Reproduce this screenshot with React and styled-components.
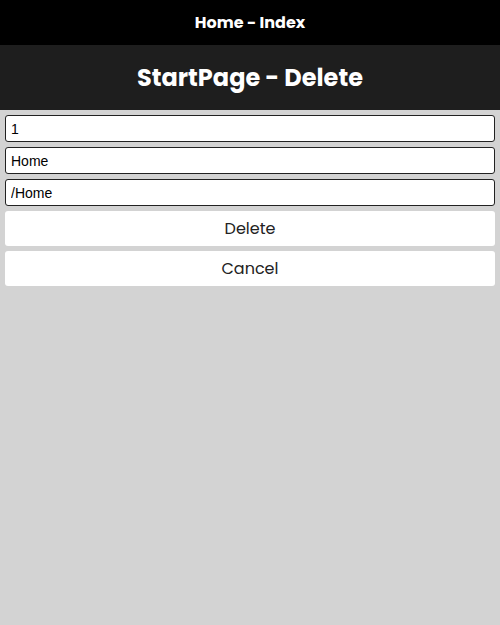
import React from "react";
import styled, { createGlobalStyle } from "styled-components";

const Global = createGlobalStyle`
  html, body { margin: 0; padding: 0; }
  body { background: #d3d3d3; min-height: 625px; }
  * { box-sizing: border-box; }
`;

const Page = styled.div`
  display: flex;
  flex-direction: column;
  min-height: 625px;
  background: #d3d3d3;
`;

const TopBar = styled.header`
  height: 45px;
  background: #000;
  color: #fff;
  display: flex;
  align-items: center;
  justify-content: center;
  font-family: Poppins, "DejaVu Sans", sans-serif;
  font-weight: 700;
  font-size: 16px;
  padding-bottom: 1px;
`;

const TitleBar = styled.div`
  height: 65px;
  background: #1e1e1e;
  color: #fff;
  display: flex;
  align-items: center;
  justify-content: center;
  font-family: Poppins, "DejaVu Sans", sans-serif;
  font-weight: 700;
  font-size: 24px;
`;

const Form = styled.form`
  display: flex;
  flex-direction: column;
  gap: 5px;
  padding: 5px;
`;

const Field = styled.input`
  height: 27px;
  width: 100%;
  border: 1px solid #222;
  border-radius: 3px;
  background: #fff;
  padding: 0 5px;
  font-family: "Liberation Sans", Arial, sans-serif;
  font-size: 14px;
  color: #000;
  outline: none;
`;

const Button = styled.button`
  height: 35px;
  width: 100%;
  border: none;
  border-radius: 3px;
  background: #fff;
  color: #222;
  font-family: Poppins, "DejaVu Sans", sans-serif;
  font-size: 16px;
  font-weight: 400;
  cursor: pointer;
`;

export default function App() {
  return (
    <Page>
      <Global />
      <TopBar>Home - Index</TopBar>
      <TitleBar>StartPage - Delete</TitleBar>
      <Form onSubmit={(e) => e.preventDefault()}>
        <Field defaultValue="1" />
        <Field defaultValue="Home" />
        <Field defaultValue="/Home" />
        <Button type="submit">Delete</Button>
        <Button type="button">Cancel</Button>
      </Form>
    </Page>
  );
}
